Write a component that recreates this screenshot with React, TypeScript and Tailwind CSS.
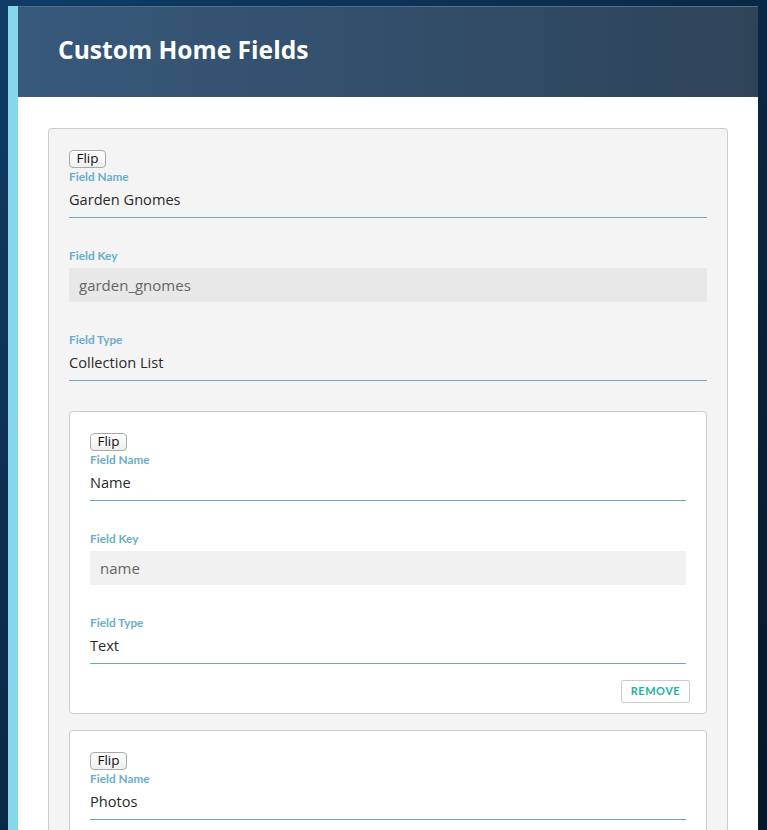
import React from "react";

type FieldProps = {
  name: string;
  fieldKey?: string;
  type?: string;
  keyBg?: string;
};

function Label({ children }: { children: React.ReactNode }) {
  return (
    <div className="h-[12px] text-[11.8px] leading-[12px] font-bold text-[#6aadca] font-['Lato',sans-serif]">
      {children}
    </div>
  );
}

function LineInput({ value }: { value: string }) {
  return (
    <div className="flex h-[35px] items-center border-b border-[#6ca6bf] pb-[1px] text-[14.6px] text-[#2a2a2a]">
      {value}
    </div>
  );
}

function FlipButton() {
  return (
    <button
      type="button"
      className="flex h-[18px] w-[37px] items-center justify-center rounded-[4px] border border-[#a9a9a9] bg-gradient-to-b from-white to-[#efefef] text-[13.5px] leading-none text-[#111] font-['Open_Sans',sans-serif]"
    >
      Flip
    </button>
  );
}

function FieldBlock({ name, fieldKey, type, keyBg }: FieldProps) {
  return (
    <>
      <FlipButton />
      <div className="mt-[3px]">
        <Label>Field Name</Label>
        <LineInput value={name} />
      </div>
      {fieldKey !== undefined ? (
        <div className="mt-[32px]">
          <Label>Field Key</Label>
          <div
            className={`mt-[6px] flex h-[34px] items-center px-[10px] text-[15px] text-[#666] ${keyBg}`}
          >
            {fieldKey}
          </div>
        </div>
      ) : null}
      {type !== undefined ? (
        <div className="mt-[32px]">
          <Label>Field Type</Label>
          <LineInput value={type} />
        </div>
      ) : null}
    </>
  );
}

export default function App() {
  return (
    <div className="h-[830px] w-full overflow-hidden bg-gradient-to-br from-[#0f3d66] via-[#0a2846] to-[#061829] font-['Open_Sans',sans-serif]">
      <div className="ml-[8px] mr-[9px] pt-[6px]">
        <div className="flex border-l-[10px] border-[#86d7ed]">
          <div className="flex-1 bg-white">
            <div className="flex h-[91px] items-center bg-gradient-to-r from-[#37597c] to-[#2e4459] pl-[40px] pb-[3px] border-t border-[#4f6f8f]">
              <h1 className="text-[24.6px] font-bold text-white">
                Custom Home Fields
              </h1>
            </div>
            <div className="px-[30px] pt-[31px] pb-[40px]">
              <div className="rounded-[4px] border border-[#cccccc] bg-[#f4f4f4] px-5 pt-[21px] pb-[16px]">
                <FieldBlock
                  name="Garden Gnomes"
                  fieldKey="garden_gnomes"
                  type="Collection List"
                  keyBg="bg-[#e8e8e8]"
                />
                <div className="mt-[30px] flex flex-col gap-[16px]">
                  <div className="rounded-[4px] border border-[#cccccc] bg-white px-5 pt-[21px] pb-[10px]">
                    <FieldBlock
                      name="Name"
                      fieldKey="name"
                      type="Text"
                      keyBg="bg-[#f1f1f1]"
                    />
                    <div className="mt-[16px] flex justify-end">
                      <button
                        type="button"
                        className="-mr-[4px] h-[23px] w-[69px] rounded-[2px] border border-[#cccccc] bg-white text-[11px] font-bold tracking-[0.5px] text-[#22b39b] font-['Lato',sans-serif]"
                      >
                        REMOVE
                      </button>
                    </div>
                  </div>
                  <div className="rounded-[4px] border border-[#cccccc] bg-white px-5 pt-[21px] pb-[40px]">
                    <FieldBlock name="Photos" />
                  </div>
                </div>
              </div>
            </div>
          </div>
        </div>
      </div>
    </div>
  );
}
